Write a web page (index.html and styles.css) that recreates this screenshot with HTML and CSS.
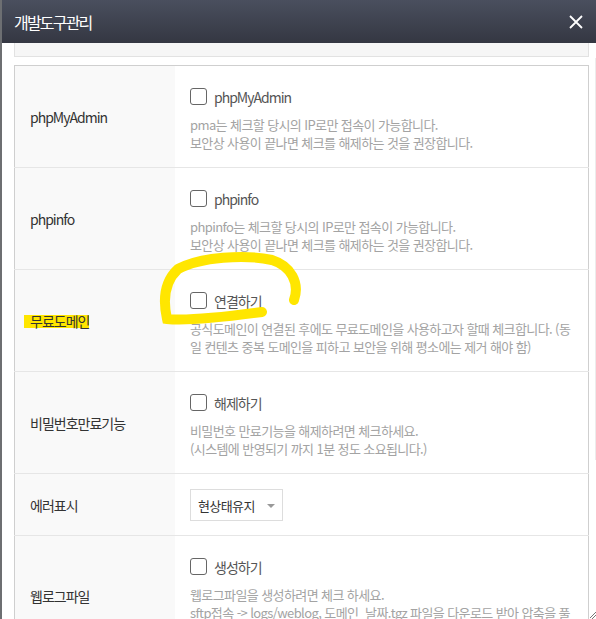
FILE: index.html
```html
<!DOCTYPE html>
<html lang="ko">
<head>
    <meta charset="utf-8">
    <title>개발도구관리</title>
    <link rel="stylesheet" href="styles.css">
</head>
<body>
    <div class="modal">
        <div class="modal-head">
            <h2 class="modal-title">개발도구관리</h2>
            <span class="modal-close">
                <svg width="14" height="14" viewBox="0 0 14 14"><path d="M1 1 L13 13 M13 1 L1 13" stroke="#fff" stroke-width="1.8"/></svg>
            </span>
        </div>
        <div class="modal-body">
            <div class="notice"></div>
            <table class="tool-table">
                <tr>
                    <th>phpMyAdmin</th>
                    <td>
                        <label class="check"><span class="box"></span>phpMyAdmin</label>
                        <p class="desc">pma는 체크할 당시의 IP로만 접속이 가능합니다.<br>보안상 사용이 끝나면 체크를 해제하는 것을 권장합니다.</p>
                    </td>
                </tr>
                <tr>
                    <th>phpinfo</th>
                    <td>
                        <label class="check"><span class="box"></span>phpinfo</label>
                        <p class="desc">phpinfo는 체크할 당시의 IP로만 접속이 가능합니다.<br>보안상 사용이 끝나면 체크를 해제하는 것을 권장합니다.</p>
                    </td>
                </tr>
                <tr>
                    <th><span class="mark">무료도메인</span></th>
                    <td>
                        <label class="check"><span class="box"></span>연결하기</label>
                        <p class="desc">공식도메인이 연결된 후에도 무료도메인을 사용하고자 할때 체크합니다. (동일 컨텐츠 중복 도메인을 피하고 보안을 위해 평소에는 제거 해야 함)</p>
                    </td>
                </tr>
                <tr>
                    <th>비밀번호만료기능</th>
                    <td>
                        <label class="check"><span class="box"></span>해제하기</label>
                        <p class="desc">비밀번호 만료기능을 해제하려면 체크하세요.<br>(시스템에 반영되기 까지 1분 정도 소요됩니다.)</p>
                    </td>
                </tr>
                <tr class="short">
                    <th>에러표시</th>
                    <td>
                        <div class="select">현상태유지<span class="caret"></span></div>
                    </td>
                </tr>
                <tr>
                    <th>웹로그파일</th>
                    <td>
                        <label class="check"><span class="box"></span>생성하기</label>
                        <p class="desc">웹로그파일을 생성하려면 체크 하세요.<br>sftp접속 -&gt; logs/weblog, 도메인_날짜.tgz 파일을 다운로드 받아 압축을 풀어 확인하시면 됩니다.</p>
                    </td>
                </tr>
            </table>
        </div>
        <div class="scroll-track"></div>
        <svg class="grip" width="6" height="8" viewBox="0 0 6 8"><path d="M6 1 L0 7 M6 4 L2 8" stroke="#777" stroke-width="1"/></svg>
    </div>
    <svg class="scribble" width="596" height="619" viewBox="0 0 596 619">
        <path d="M262 312 C225 317, 186 321, 167 319 C163 301, 164 282, 178 269 C200 257, 245 254, 272 260 C291 266, 300 283, 294 300" fill="none" stroke="#ffe600" stroke-width="10" stroke-linecap="round"/>
    </svg>
</body>
</html>
```

FILE: styles.css
```css
html, body {
    margin: 0;
    height: 100%;
}

body {
    background: #6d6f72;
    font-family: "Noto Sans CJK KR", "Noto Sans", sans-serif;
    overflow: hidden;
}

.modal {
    margin-left: 2px;
    height: 619px;
    background: #fff;
    overflow: hidden;
    position: relative;
}

.modal-head {
    height: 43px;
    padding: 0 13px 0 12px;
    display: flex;
    justify-content: space-between;
    align-items: center;
    background: linear-gradient(#4a4f5e, #343742);
}

.modal-title {
    margin: 0;
    font-size: 16px;
    font-weight: normal;
    color: #fff;
    letter-spacing: -1.8px;
}

.modal-close {
    display: flex;
    margin-top: 1px;
}

.modal-body {
    padding: 0 7px 0 12px;
}

.notice {
    height: 13px;
    background: #f6f6f6;
    border: 1px solid #e2e2e2;
    border-top: 0;
    margin-bottom: 8px;
}

.tool-table {
    width: 100%;
    border-collapse: collapse;
    border: 1px solid #cfcfcf;
}

.tool-table tr + tr {
    border-top: 1px solid #e6e6e6;
}

.tool-table th {
    width: 145px;
    padding: 0 0 0 15px;
    background: #f9f9f9;
    text-align: left;
    font-weight: normal;
    font-size: 14px;
    letter-spacing: -1px;
    color: #333;
}

.tool-table td {
    padding: 20px 12px 15px 15px;
    vertical-align: top;
}

.tool-table tr.short td {
    padding: 15px 15px 14px;
}

.check {
    display: flex;
    align-items: center;
    height: 21px;
    font-size: 14px;
    letter-spacing: -1px;
    color: #555;
}

.box {
    width: 15px;
    height: 15px;
    border: 1px solid #666;
    border-radius: 3px;
    margin-right: 7px;
}

.desc {
    margin: 9px 0 0;
    font-size: 13px;
    line-height: 18px;
    letter-spacing: -0.6px;
    color: #a3a3a3;
}

.mark {
    display: inline-block;
    line-height: 13px;
    padding-left: 6px;
    margin-left: -6px;
    background: #ffe600;
}

.select {
    width: 84px;
    height: 30px;
    padding-left: 7px;
    border: 1px solid #ddd;
    display: flex;
    align-items: center;
    font-size: 13px;
    letter-spacing: -0.6px;
    color: #333;
    position: relative;
}

.caret {
    position: absolute;
    right: 7px;
    top: 14px;
    border-left: 4px solid transparent;
    border-right: 4px solid transparent;
    border-top: 4px solid #999;
}

.scroll-track {
    position: absolute;
    right: 0;
    top: 58px;
    width: 1px;
    height: 402px;
    background: #ececec;
}

.grip {
    position: absolute;
    right: 0;
    bottom: 0;
}

.scribble {
    position: absolute;
    left: 0;
    top: 0;
    pointer-events: none;
}
```
